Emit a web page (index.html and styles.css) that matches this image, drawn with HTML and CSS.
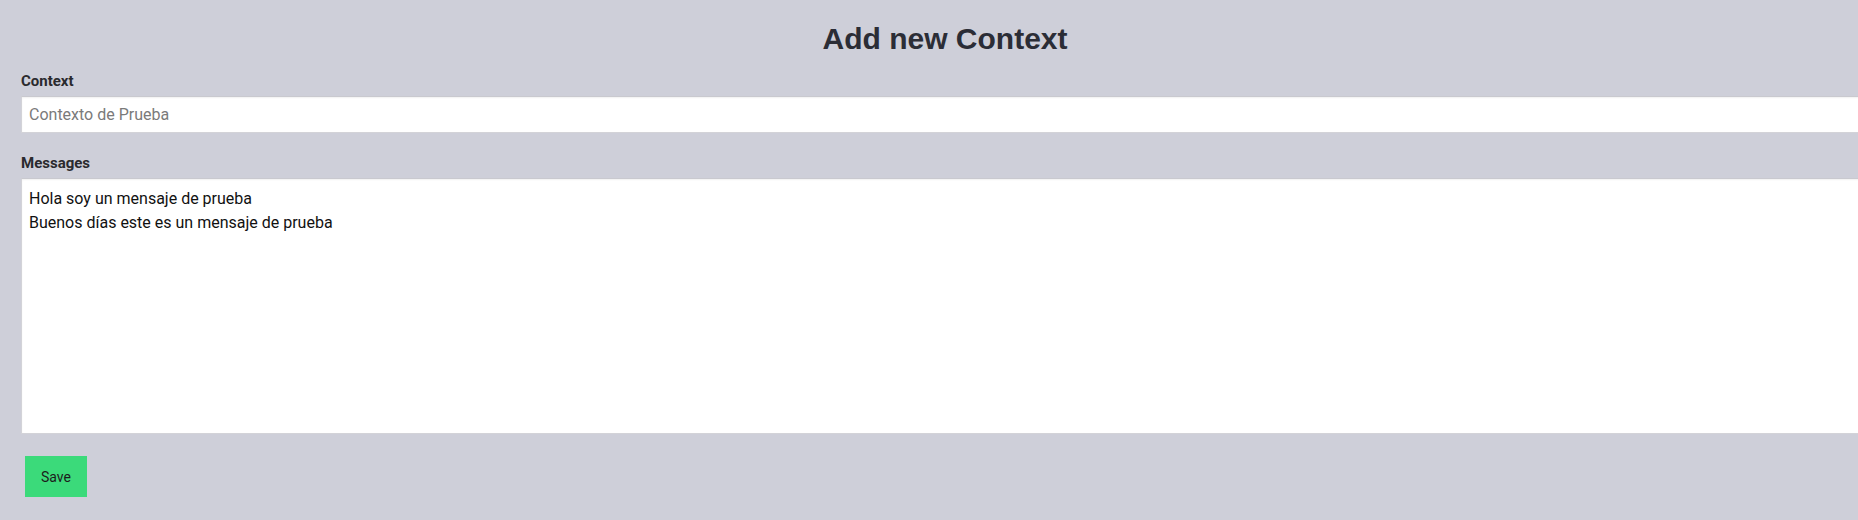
FILE: index.html
```html
<!DOCTYPE html>
<html lang="en">
<head>
<meta charset="utf-8">
<title>Add new Context</title>
<link rel="stylesheet" href="styles.css">
</head>
<body>
<div class="viewport">
  <form class="form">
    <h1 class="title">Add new Context</h1>
    <label class="label" for="ctx">Context</label>
    <input class="field" id="ctx" type="text" placeholder="Contexto de Prueba">
    <label class="label label-gap" for="msgs">Messages</label>
    <textarea class="area" id="msgs">Hola soy un mensaje de prueba
Buenos días este es un mensaje de prueba</textarea>
    <div class="actions">
      <button class="btn" type="button">Save</button>
    </div>
  </form>
</div>
</body>
</html>
```
FILE: styles.css
```css
html, body {
  margin: 0;
  padding: 0;
  background: #cecfd9;
  overflow: hidden;
}
.viewport {
  width: 100%;
  height: 520px;
  overflow: hidden;
}
.form {
  width: 1848px;
  padding: 22px 0 0 21px;
  display: flex;
  flex-direction: column;
  align-items: stretch;
  font-family: Roboto, "Liberation Sans", sans-serif;
}
.title {
  margin: 0 0 17px 0;
  font-family: "Liberation Sans", Arial, sans-serif;
  font-weight: 700;
  font-size: 30px;
  line-height: 34px;
  text-align: center;
  color: #2b2d36;
}
.label {
  display: block;
  font-size: 15px;
  font-weight: 700;
  line-height: 16px;
  color: #2a2a2e;
  margin-bottom: 7px;
}
.label-gap {
  margin-top: 22px;
}
.field {
  box-sizing: border-box;
  width: 100%;
  height: 37px;
  margin: 0;
  padding: 0 7px;
  border: 1px solid #d3d3d8;
  border-top-color: #c9c9cf;
  box-shadow: inset 0 1px 2px rgba(0, 0, 0, 0.06);
  background: #fff;
  font-family: Roboto, sans-serif;
  font-size: 16px;
  color: #222;
  outline: none;
}
.field::placeholder {
  color: #7a7a7a;
}
.area {
  box-sizing: border-box;
  width: 100%;
  height: 256px;
  margin: 0;
  padding: 8px 7px;
  border: 1px solid #d3d3d8;
  border-top-color: #c9c9cf;
  box-shadow: inset 0 1px 2px rgba(0, 0, 0, 0.06);
  background: #fff;
  font-family: Roboto, sans-serif;
  font-size: 16px;
  line-height: 24px;
  color: #111;
  resize: none;
  outline: none;
}
.actions {
  display: flex;
  padding: 22px 0 0 4px;
}
.btn {
  width: 62px;
  height: 41px;
  margin: 0;
  padding: 0;
  border: none;
  background: #3bda7a;
  font-family: Roboto, sans-serif;
  font-size: 14px;
  color: #1c1c1c;
  cursor: pointer;
}
```
